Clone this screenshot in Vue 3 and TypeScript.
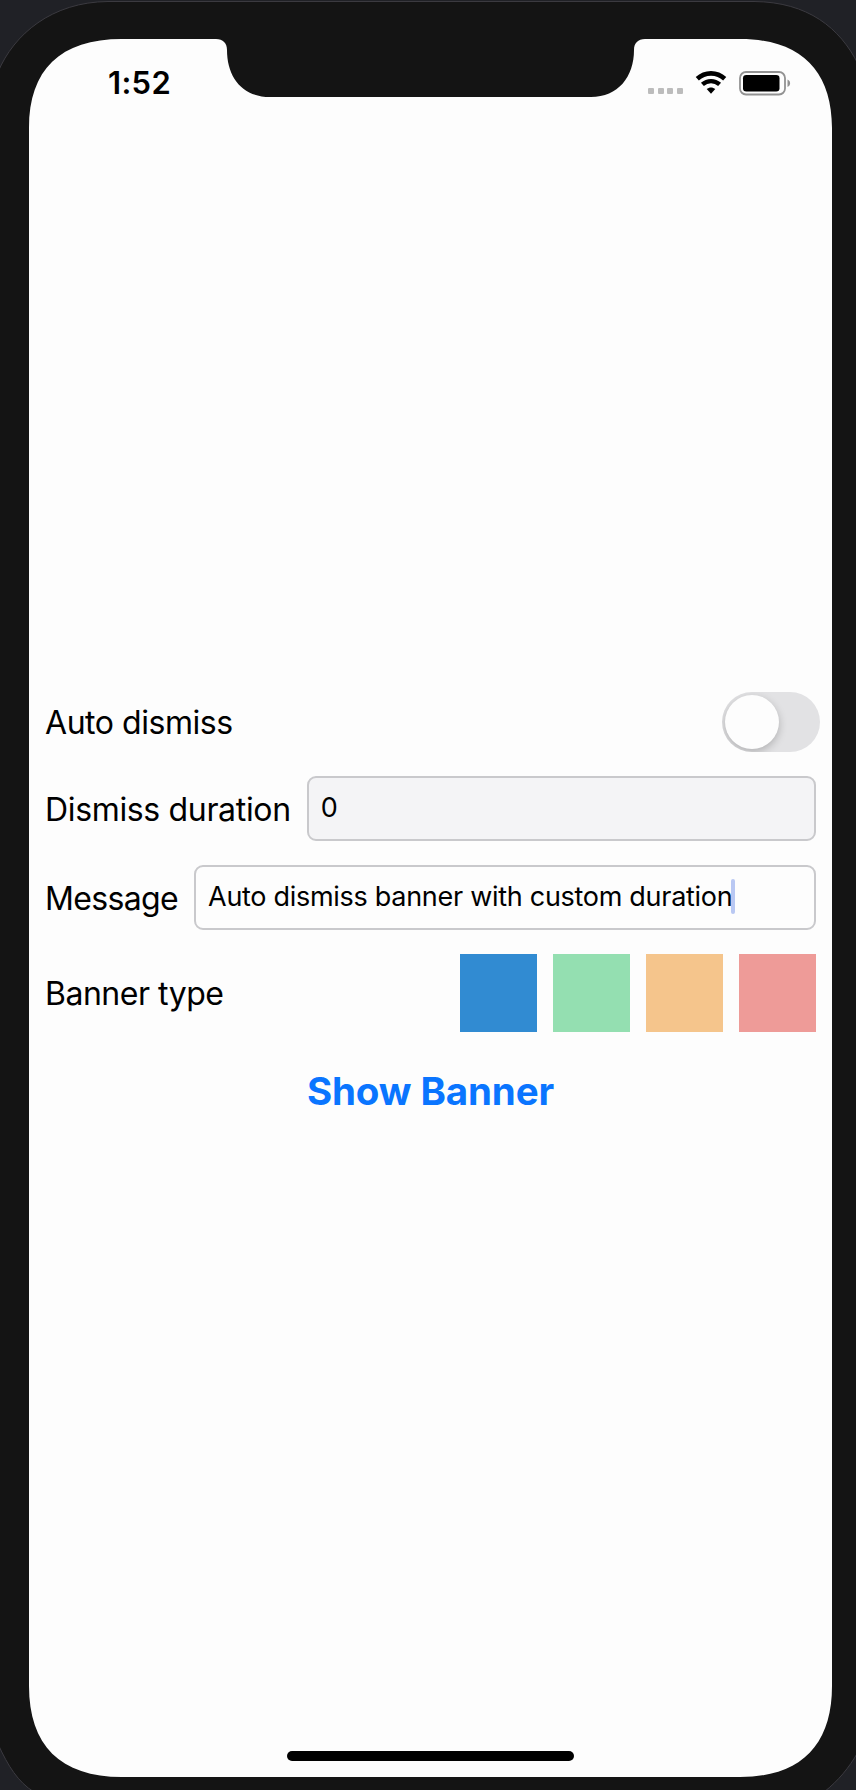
<script setup lang="ts">
import { ref } from 'vue'

interface BannerType {
  name: string
  color: string
}

const autoDismiss = ref(false)
const duration = ref('0')
const message = ref('Auto dismiss banner with custom duration')
const bannerTypes: BannerType[] = [
  { name: 'info', color: '#318bd2' },
  { name: 'success', color: '#94dfb1' },
  { name: 'warning', color: '#f5c58c' },
  { name: 'error', color: '#ee9b98' },
]
</script>

<template>
  <div class="device">
    <svg class="shell" width="856" height="1790" viewBox="0 0 856 1790" aria-hidden="true">
      <path
        class="body"
        d="M-2 72C14 34 52 2 108 1.5H754C808 2 840 28 858 64V1752C849 1768 838 1781 824 1792H34C18 1782 8 1766 -2 1744Z"
      />
      <path
        class="glass"
        d="M29 128C29 70 60 39 122 39H216C223 39 227 43 227 50C227 77 242 97 270 97H591C618 97 634 77 634 50C634 43 638 39 645 39H740C800 39 832 70 832 128V1686C832 1745 801 1777 740 1777H122C60 1777 29 1745 29 1686Z"
      />
    </svg>

    <main class="screen">
      <header class="status">
        <span class="time">1:52</span>
        <div class="indicators">
          <div class="signal"><i v-for="n in 4" :key="n"></i></div>
          <svg class="wifi" width="32" height="25" viewBox="0 0 32 25" fill="none">
            <path d="M2.3 8.8C10 1.6 22 1.6 29.7 8.8" stroke="#000" stroke-width="4.6" />
            <path d="M7.4 14.4C12.4 10 19.6 10 24.6 14.4" stroke="#000" stroke-width="4.4" />
            <path d="M11.7 19C14.2 16.9 17.8 16.9 20.3 19L16 23.8Z" fill="#000" />
          </svg>
          <svg class="battery" width="52" height="25" viewBox="0 0 52 25">
            <rect x="1" y="1" width="45" height="22.5" rx="6" fill="none" stroke="#929292" stroke-width="1.8" />
            <rect x="4" y="4" width="36.5" height="16.5" rx="3.3" />
            <path d="M48.5 8.5C52 10 52 14.5 48.5 16Z" fill="#929292" />
          </svg>
        </div>
      </header>

      <section class="form">
        <div class="row toggle-row">
          <span class="label auto">Auto dismiss</span>
          <button
            class="switch"
            :class="{ on: autoDismiss }"
            role="switch"
            :aria-checked="autoDismiss"
            @click="autoDismiss = !autoDismiss"
          >
            <span class="knob"></span>
          </button>
        </div>
        <div class="row field-row">
          <span class="label duration">Dismiss duration</span>
          <div class="field disabled"><span>{{ duration }}</span></div>
        </div>
        <div class="row field-row">
          <span class="label message">Message</span>
          <div class="field">
            <span class="value">{{ message }}</span><span class="caret"></span>
          </div>
        </div>
        <div class="row type-row">
          <span class="label type">Banner type</span>
          <div class="swatches">
            <button
              v-for="type in bannerTypes"
              :key="type.name"
              class="swatch"
              :aria-label="type.name"
              :style="{ backgroundColor: type.color }"
            ></button>
          </div>
        </div>
        <button class="show">Show Banner</button>
      </section>

      <div class="home"></div>
    </main>
  </div>
</template>

<style>
body {
  margin: 0;
  background: #202126;
}
</style>

<style scoped>
.device {
  position: relative;
  width: 856px;
  height: 1790px;
  overflow: hidden;
  background: #202126;
  font-family: Inter, "Liberation Sans", sans-serif;
  color: #000;
}
.shell {
  position: absolute;
  inset: 0;
}
.body {
  fill: #141414;
  stroke: #3b3a40;
  stroke-width: 1;
}
.glass {
  fill: #fdfdfd;
}
.screen {
  position: relative;
  display: flex;
  flex-direction: column;
  box-sizing: border-box;
  width: 803px;
  height: 1738px;
  margin: 39px 0 0 29px;
}
button {
  border: 0;
  padding: 0;
  font: inherit;
}
.status {
  display: flex;
  justify-content: space-between;
  height: 58px;
  padding: 0 41px 0 79px;
}
.time {
  margin-top: 25px;
  font-size: 31px;
  line-height: 38px;
  font-weight: 600;
  letter-spacing: 0.3px;
}
.indicators {
  display: flex;
  align-items: flex-start;
}
.signal {
  display: flex;
  gap: 3.7px;
  margin: 49px 12px 0 0;
}
.signal i {
  width: 6px;
  height: 6px;
  border-radius: 1px;
  background: #bcbcbc;
}
.wifi {
  margin: 31px 12px 0 0;
}
.battery {
  margin-top: 31.5px;
}
.form {
  display: flex;
  flex-direction: column;
  gap: 24px;
  margin-top: 594px;
  padding: 0 16px;
}
.row {
  display: flex;
  align-items: center;
  justify-content: space-between;
}
.toggle-row {
  height: 61px;
  margin-right: -4px;
}
.field-row {
  height: 65px;
  gap: 16px;
}
.type-row {
  height: 78px;
}
.label {
  flex: none;
  padding-top: 2px;
  font-size: 32px;
  line-height: 40px;
  white-space: nowrap;
}
.auto {
  letter-spacing: -0.45px;
}
.duration {
  letter-spacing: -0.34px;
}
.message {
  letter-spacing: -0.65px;
}
.type {
  letter-spacing: -0.48px;
}
.field {
  display: flex;
  align-items: center;
  flex: 1;
  box-sizing: border-box;
  height: 65px;
  padding: 0 12px 3px;
  border: 2px solid #c9c9cc;
  border-radius: 9px;
  font-size: 27px;
  white-space: nowrap;
}
.disabled {
  background: #f4f4f6;
}
.value {
  letter-spacing: -0.29px;
}
.caret {
  width: 4px;
  height: 35px;
  margin-left: -1px;
  border-radius: 2px;
  background: #b9c8f3;
}
.switch {
  box-sizing: border-box;
  width: 98px;
  height: 60px;
  padding: 3px;
  border-radius: 30px;
  overflow: hidden;
  background: #e2e2e4;
}
.knob {
  display: block;
  width: 54px;
  height: 54px;
  border-radius: 50%;
  background: #fdfdfd;
  box-shadow: 0 3px 8px rgba(0, 0, 0, 0.22);
}
.switch.on {
  background: #34c759;
}
.switch.on .knob {
  margin-left: 38px;
}
.swatches {
  display: flex;
  gap: 15.5px;
}
.swatch {
  width: 77.5px;
  height: 77.5px;
}
.show {
  align-self: center;
  margin-top: 12px;
  background: none;
  color: #0a75ff;
  font-size: 38.5px;
  line-height: 46px;
  font-weight: 700;
  letter-spacing: -0.12px;
  white-space: nowrap;
}
.home {
  width: 287px;
  height: 10px;
  margin: auto auto 16px;
  border-radius: 5px;
  background: #000;
}
</style>
